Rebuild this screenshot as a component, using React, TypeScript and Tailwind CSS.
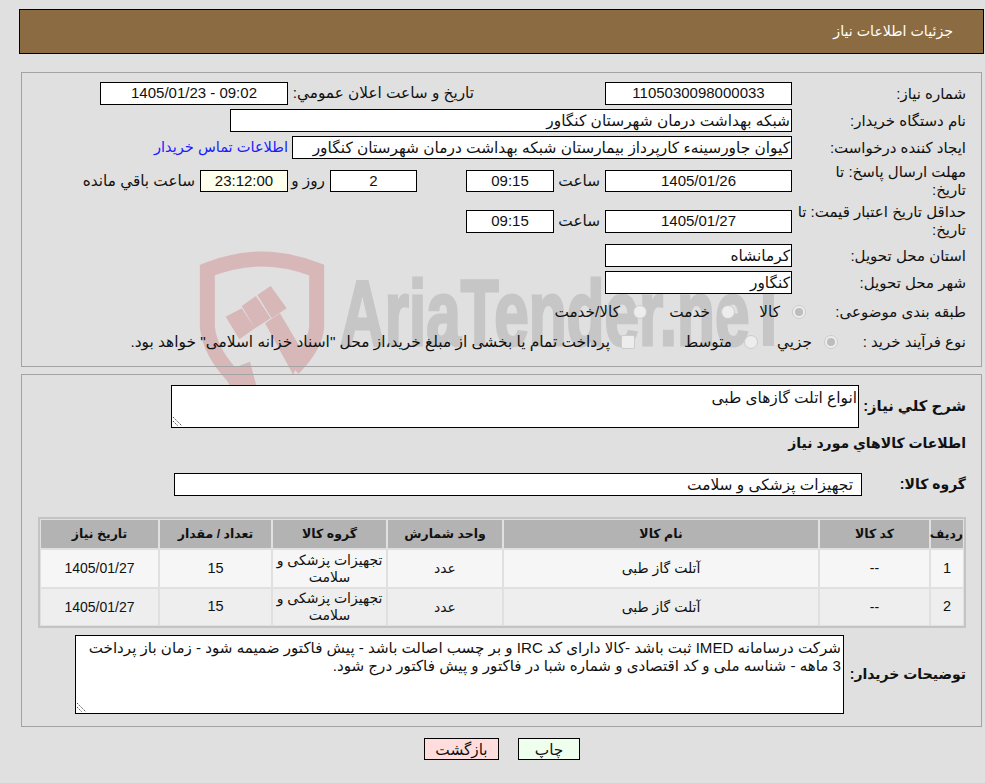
const FONT = "font-['Liberation_Sans','DejaVu_Sans',sans-serif]";

function Box({ className = "", num = false, children }: { className?: string; num?: boolean; children?: React.ReactNode }) {
  return (
    <div className={`flex shrink-0 items-center border border-black bg-white text-[#111] ${num ? "justify-center text-[15px]" : "pr-px text-[15.4px]"} ${className}`}>
      {children}
    </div>
  );
}

function Label({ className = "w-[189px] pl-[7px]", children }: { className?: string; children: React.ReactNode }) {
  return <div className={`shrink-0 pr-[15px] text-[15px] leading-[18px] ${className}`}>{children}</div>;
}

function Radio({ checked = false }: { checked?: boolean }) {
  return (
    <span className="flex h-[14px] w-[14px] shrink-0 items-center justify-center rounded-full border border-[#cccccc] bg-[#ededed]">
      {checked && <span className="h-[8px] w-[8px] rounded-full bg-[#bdbdbd]" />}
    </span>
  );
}

function Grip() {
  return (
    <svg className="absolute bottom-0 left-0" width="12" height="12" viewBox="0 0 12 12" fill="none" stroke="#555" strokeDasharray="1.5 1">
      <path d="M1 2l9 9M1 6l5 5" />
    </svg>
  );
}

function Watermark() {
  return (
    <>
      <svg className="pointer-events-none absolute left-[180px] top-[240px]" width="330" height="200" viewBox="0 0 990 600" fill="none">
        <path d="M170 420Q90 340 82 262L82 90Q165 57 245 57Q325 57 410 90L410 262Q405 320 340 385" stroke="#d8b7b9" strokeWidth="45" />
        <path d="M137 230L185 205L225 265L178 298zM185 198L228 168L272 235L225 265zM232 165L272 138L320 205L275 235zM255 250L300 220L365 330L340 405zM210 365L230 440L150 440L130 395z" fill="#d8b7b9" />
      </svg>
      <div dir="ltr" className="pointer-events-none absolute left-[340px] top-[258px] origin-left scale-x-[0.675] whitespace-nowrap font-['Liberation_Sans'] text-[92px] leading-[110px] font-bold text-[#c6c6c6] [-webkit-text-stroke:3px_#c6c6c6]">
        AriaTender.neT
      </div>
    </>
  );
}

export default function App() {
  return (
    <div dir="rtl" className={`relative h-[783px] w-[985px] overflow-hidden bg-[#e0e0e0] text-[#111] ${FONT}`}>
      <Watermark />

      <div className="relative pt-[9px] pr-px pl-[19px]">
        <div className="flex h-[45px] items-center border border-black bg-[#8b6b41] pr-[30px] text-[14.2px] text-white">
          جزئیات اطلاعات نیاز
        </div>
      </div>

      <div className="relative mt-[18px] mr-[3px] ml-[21px] h-[295px] border border-[#a3a3a3] pt-[9px] text-[15.3px]">
        <div className="flex h-[23px] items-center">
          <Label>شماره نیاز:</Label>
          <Box num className="h-[23px] w-[187px]">1105030098000033</Box>
          <div className="mr-[131px] w-[186px] shrink-0">تاریخ و ساعت اعلان عمومي:</div>
          <Box num className="h-[23px] w-[188px]"><span dir="ltr">1405/01/23 - 09:02</span></Box>
        </div>
        <div className="mt-[4px] flex h-[23px] items-center">
          <Label>نام دستگاه خریدار:</Label>
          <Box className="h-[23px] w-[562px]">شبکه بهداشت درمان شهرستان کنگاور</Box>
        </div>
        <div className="mt-[4px] flex h-[23px] items-center">
          <Label>ایجاد کننده درخواست:</Label>
          <Box className="h-[23px] w-[500px]">کیوان جاورسینهء کارپرداز بیمارستان شبکه بهداشت درمان شهرستان کنگاور</Box>
          <span className="mr-[4px] text-[14.6px] text-[#1a1aff]">اطلاعات تماس خریدار</span>
        </div>
        <div className="mt-[4px] flex h-[36px] items-center">
          <Label>مهلت ارسال پاسخ: تا تاریخ:</Label>
          <Box num className="h-[22px] w-[187px]">1405/01/26</Box>
          <span className="mr-[5px] w-[46px] shrink-0">ساعت</span>
          <Box num className="h-[22px] w-[88px]">09:15</Box>
          <Box num className="mr-[49px] h-[22px] w-[87px]">2</Box>
          <span className="mr-[5px] w-[37px] shrink-0 whitespace-nowrap">روز و</span>
          <Box num className="h-[22px] w-[88px] !bg-[#ffffee]">23:12:00</Box>
          <span className="mr-[5px] whitespace-nowrap">ساعت باقي مانده</span>
        </div>
        <div className="mt-[4px] flex h-[36px] items-center">
          <Label className="w-[189px]">حداقل تاریخ اعتبار قیمت: تا تاریخ:</Label>
          <Box num className="h-[23px] w-[187px]">1405/01/27</Box>
          <span className="mr-[5px] w-[46px] shrink-0">ساعت</span>
          <Box num className="h-[23px] w-[88px]">09:15</Box>
        </div>
        <div className="mt-[5px] flex h-[23px] items-center">
          <Label>استان محل تحویل:</Label>
          <Box className="h-[23px] w-[187px]">کرمانشاه</Box>
        </div>
        <div className="mt-[4px] flex h-[23px] items-center">
          <Label>شهر محل تحویل:</Label>
          <Box className="h-[23px] w-[187px]">کنگاور</Box>
        </div>
        <div className="mt-[6px] flex h-[24px] items-center">
          <Label className="w-[175px]">طبقه بندی موضوعی:</Label>
          <Radio checked />
          <span className="mr-[12px] w-[45px] shrink-0">کالا</span>
          <Radio />
          <span className="mr-[11px] w-[63px] shrink-0">خدمت</span>
          <Radio />
          <span className="mr-[13px]">کالا/خدمت</span>
        </div>
        <div className="mt-[6px] flex h-[24px] items-center">
          <Label className="w-[143px]">نوع فرآیند خرید :</Label>
          <Radio checked />
          <span className="mr-[12px] w-[54px] shrink-0">جزیي</span>
          <Radio />
          <span className="mr-[12px] w-[97px] shrink-0">متوسط</span>
          <span className="h-[14px] w-[14px] shrink-0 rounded-[2px] border border-[#cccccc] bg-[#ededed]" />
          <span className="mr-[11px] whitespace-nowrap text-[15.4px]">پرداخت تمام یا بخشی از مبلغ خرید،از محل "اسناد خزانه اسلامی" خواهد بود.</span>
        </div>
      </div>

      <div className="relative mt-[7px] mr-[3px] ml-[21px] h-[353px] border border-[#a3a3a3] pt-[10px]">
        <div className="flex">
          <div className="flex h-[43px] w-[122px] shrink-0 items-center pr-[15px] text-[14.8px] font-bold">شرح كلي نياز:</div>
          <div className="relative h-[43px] w-[688px] border border-black bg-white px-px text-[15.4px]">
            انواع اتلت گازهای طبی
            <Grip />
          </div>
        </div>
        <div className="mt-[5px] pr-[15px] text-[14px] leading-[20px] font-bold">اطلاعات كالاهاي مورد نياز</div>
        <div className="mt-[20px] flex items-center">
          <div className="w-[119px] shrink-0 pr-[15px] text-[14px] font-bold">گروه کالا:</div>
          <div className="flex h-[23px] w-[688px] items-center border border-black bg-white pr-[8px] text-[15.4px]">تجهیزات پزشکی و سلامت</div>
        </div>

        <div className="mt-[21px] mr-[15px] w-[928px] border-2 border-[#c4c4c4]">
          <table className="-m-px w-[926px] table-fixed border-separate border-spacing-[2px] text-center text-[14px]">
            <thead>
              <tr className="h-[28px] bg-[#b3b3b3] text-[12.5px] font-bold">
                <th className="w-[32px]">ردیف</th>
                <th className="w-[109px]">کد کالا</th>
                <th className="w-[314px]">نام کالا</th>
                <th className="w-[114px]">واحد شمارش</th>
                <th className="w-[113px]">گروه کالا</th>
                <th className="w-[111px]">تعداد / مقدار</th>
                <th>تاریخ نیاز</th>
              </tr>
            </thead>
            <tbody>
              {[1, 2].map((n) => (
                <tr key={n} className={`${n === 1 ? "h-[37px] bg-[#f6f6f6]" : "h-[36px] bg-[#eeeeee]"}`}>
                  <td className="text-[14.5px]">{n}</td>
                  <td>--</td>
                  <td>آتلت گاز طبی</td>
                  <td>عدد</td>
                  <td className="leading-[17px]">تجهیزات پزشکی و سلامت</td>
                  <td className="text-[14.5px]">15</td>
                  <td>1405/01/27</td>
                </tr>
              ))}
            </tbody>
          </table>
        </div>

        <div className="mt-[7px] flex items-center">
          <div className="w-[137px] shrink-0 pr-[15px] text-[14px] font-bold">توضیحات خریدار:</div>
          <div className="relative h-[79px] w-[769px] border border-black bg-white px-[2px] pt-[3px] text-[15.1px] leading-[18px]">
            شرکت درسامانه IMED ثبت باشد -کالا دارای کد IRC و بر چسب اصالت باشد - پیش فاکتور ضمیمه شود - زمان باز پرداخت 3 ماهه - شناسه ملی و کد اقتصادی و شماره شبا در فاکتور و پیش فاکتور درج شود.
            <Grip />
          </div>
        </div>
      </div>

      <div className="mt-[11px] flex justify-center gap-[19px] pl-[19px]">
        <button className="h-[22px] w-[62px] border border-black bg-[#eeffee] text-[15.3px]">چاپ</button>
        <button className="h-[22px] w-[75px] border border-black bg-[#ffdddd] text-[15.3px]">بازگشت</button>
      </div>
    </div>
  );
}
